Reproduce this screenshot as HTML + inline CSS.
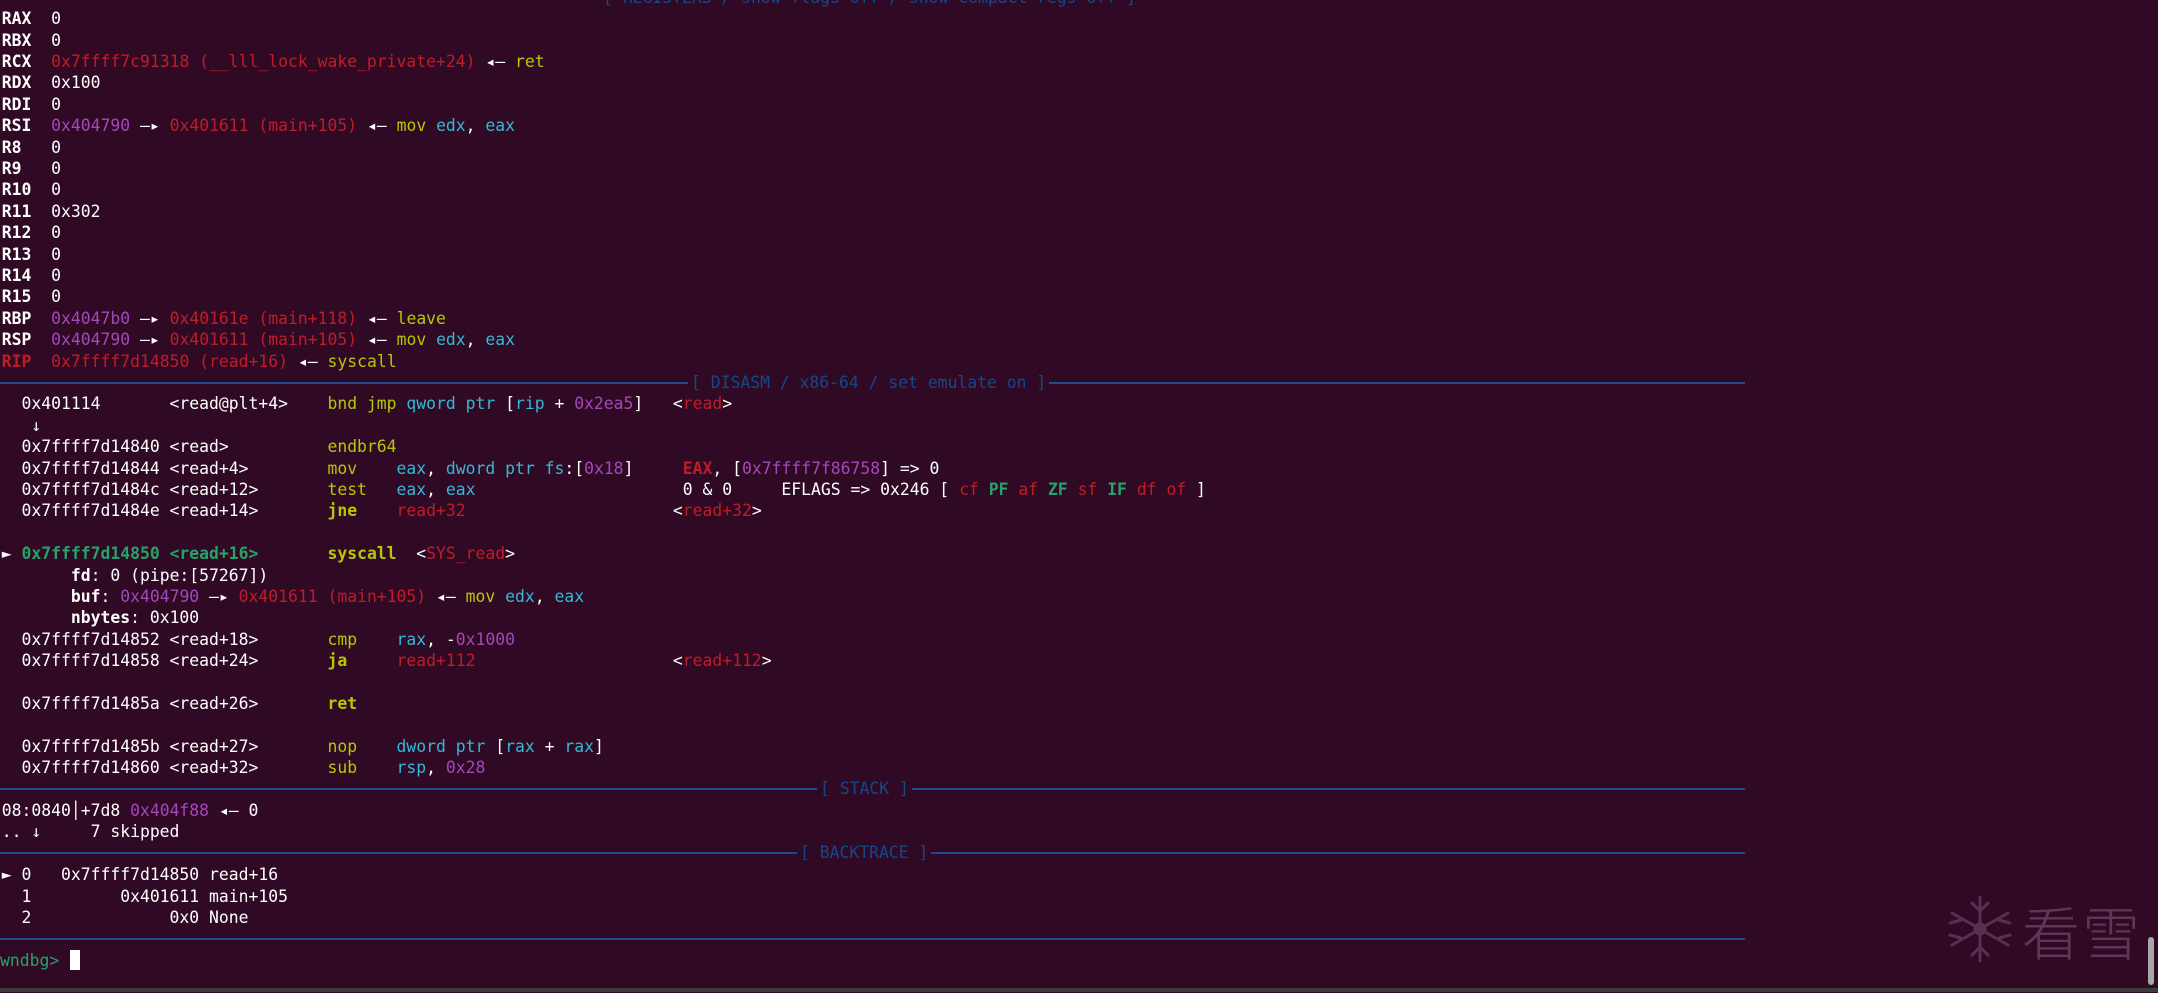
<!DOCTYPE html>
<html><head><meta charset="utf-8"><style>
html,body{margin:0;padding:0;}
body{width:2158px;height:992px;background:#300a24;overflow:hidden;position:relative;font-family:"DejaVu Sans Mono","Liberation Mono",monospace;font-size:16.4px;color:#ffffff;}
.w{position:absolute;left:0;top:1px;width:2158px;height:992px;}
.r{position:absolute;left:1.8px;height:21.4px;line-height:21.4px;white-space:pre;}
b{font-weight:bold;}
.R{color:#c01c28}.P{color:#a347ba}.Y{color:#b6c70a}.C{color:#33b8d6}.G{color:#26a269}.B{color:#12488b}
.sep{position:absolute;left:0;width:1745px;height:2px;background:#1b4c8e;}
.tt{position:absolute;height:21.4px;line-height:21.4px;white-space:pre;color:#12488b;background:#300a24;padding:0 3px;}
</style></head><body><div class="w">
<div class="sep" style="top:-5px"></div><div class="tt" style="top:-14px;left:600px">[ REGISTERS / show-flags off / show-compact-regs off ]</div>
<div class="r" style="top:7.2px"><b>RAX</b>  0</div>
<div class="r" style="top:28.6px"><b>RBX</b>  0</div>
<div class="r" style="top:50px"><b>RCX</b>  <span class="R">0x7ffff7c91318 (__lll_lock_wake_private+24)</span> ◂— <span class="Y">ret</span></div>
<div class="r" style="top:71.4px"><b>RDX</b>  0x100</div>
<div class="r" style="top:92.8px"><b>RDI</b>  0</div>
<div class="r" style="top:114.2px"><b>RSI</b>  <span class="P">0x404790</span> —▸ <span class="R">0x401611 (main+105)</span> ◂— <span class="Y">mov</span> <span class="C">edx</span>, <span class="C">eax</span></div>
<div class="r" style="top:135.6px"><b>R8 </b>  0</div>
<div class="r" style="top:157px"><b>R9 </b>  0</div>
<div class="r" style="top:178.4px"><b>R10</b>  0</div>
<div class="r" style="top:199.8px"><b>R11</b>  0x302</div>
<div class="r" style="top:221.2px"><b>R12</b>  0</div>
<div class="r" style="top:242.6px"><b>R13</b>  0</div>
<div class="r" style="top:264px"><b>R14</b>  0</div>
<div class="r" style="top:285.4px"><b>R15</b>  0</div>
<div class="r" style="top:306.8px"><b>RBP</b>  <span class="P">0x4047b0</span> —▸ <span class="R">0x40161e (main+118)</span> ◂— <span class="Y">leave</span></div>
<div class="r" style="top:328.2px"><b>RSP</b>  <span class="P">0x404790</span> —▸ <span class="R">0x401611 (main+105)</span> ◂— <span class="Y">mov</span> <span class="C">edx</span>, <span class="C">eax</span></div>
<div class="r" style="top:349.6px"><b class="R">RIP</b>  <span class="R">0x7ffff7d14850 (read+16)</span> ◂— <span class="Y">syscall</span></div>
<div class="sep" style="top:381px"></div><div class="tt" style="top:371px;left:688px">[ DISASM / x86-64 / set emulate on ]</div>
<div class="r" style="top:392.4px">  0x401114       &lt;read@plt+4&gt;    <span class="Y">bnd jmp</span> <span class="C">qword ptr</span> [<span class="C">rip</span> + <span class="P">0x2ea5</span>]   &lt;<span class="R">read</span>&gt;</div>
<div class="r" style="top:413.8px">   ↓</div>
<div class="r" style="top:435.2px">  0x7ffff7d14840 &lt;read&gt;          <span class="Y">endbr64</span></div>
<div class="r" style="top:456.6px">  0x7ffff7d14844 &lt;read+4&gt;        <span class="Y">mov</span>    <span class="C">eax</span>, <span class="C">dword ptr fs</span>:[<span class="P">0x18</span>]     <b class="R">EAX</b>, [<span class="P">0x7ffff7f86758</span>] =&gt; 0</div>
<div class="r" style="top:478px">  0x7ffff7d1484c &lt;read+12&gt;       <span class="Y">test</span>   <span class="C">eax</span>, <span class="C">eax</span>                     0 &amp; 0     EFLAGS =&gt; 0x246 [ <span class="R">cf</span> <b class="G">PF</b> <span class="R">af</span> <b class="G">ZF</b> <span class="R">sf</span> <b class="G">IF</b> <span class="R">df</span> <span class="R">of</span> ]</div>
<div class="r" style="top:499.4px">  0x7ffff7d1484e &lt;read+14&gt;       <b class="Y">jne</b>    <span class="R">read+32</span>                     &lt;<span class="R">read+32</span>&gt;</div>
<div class="r" style="top:542.2px">► <b class="G">0x7ffff7d14850 &lt;read+16&gt;</b>       <b class="Y">syscall</b>  &lt;<span class="R">SYS_read</span>&gt;</div>
<div class="r" style="top:563.6px">       <b>fd</b>: 0 (pipe:[57267])</div>
<div class="r" style="top:585px">       <b>buf</b>: <span class="P">0x404790</span> —▸ <span class="R">0x401611 (main+105)</span> ◂— <span class="Y">mov</span> <span class="C">edx</span>, <span class="C">eax</span></div>
<div class="r" style="top:606.4px">       <b>nbytes</b>: 0x100</div>
<div class="r" style="top:627.8px">  0x7ffff7d14852 &lt;read+18&gt;       <span class="Y">cmp</span>    <span class="C">rax</span>, -<span class="P">0x1000</span></div>
<div class="r" style="top:649.2px">  0x7ffff7d14858 &lt;read+24&gt;       <b class="Y">ja</b>     <span class="R">read+112</span>                    &lt;<span class="R">read+112</span>&gt;</div>
<div class="r" style="top:692px">  0x7ffff7d1485a &lt;read+26&gt;       <b class="Y">ret</b></div>
<div class="r" style="top:734.8px">  0x7ffff7d1485b &lt;read+27&gt;       <span class="Y">nop</span>    <span class="C">dword ptr</span> [<span class="C">rax</span> + <span class="C">rax</span>]</div>
<div class="r" style="top:756.2px">  0x7ffff7d14860 &lt;read+32&gt;       <span class="Y">sub</span>    <span class="C">rsp</span>, <span class="P">0x28</span></div>
<div class="sep" style="top:787px"></div><div class="tt" style="top:777px;left:817px">[ STACK ]</div>
<div class="r" style="top:799px">08:0840│+7d8 <span class="P">0x404f88</span> ◂— 0</div>
<div class="r" style="top:820.4px">.. ↓     7 skipped</div>
<div class="sep" style="top:851px"></div><div class="tt" style="top:841px;left:797px">[ BACKTRACE ]</div>
<div class="r" style="top:863.2px">► 0   0x7ffff7d14850 read+16</div>
<div class="r" style="top:884.6px">  1         0x401611 main+105</div>
<div class="r" style="top:906px">  2              0x0 None</div>
<div class="sep" style="top:937px"></div>
<div class="r" style="top:948.8px;left:0"><span class="G">wndbg&gt;</span> </div>
<div style="position:absolute;left:70px;top:949px;width:10px;height:20px;background:#fff"></div>
</div>
<svg style="position:absolute;left:1945px;top:893px" width="70" height="72" viewBox="0 0 70 72">
<g stroke="#5c2e52" stroke-width="3" fill="none" stroke-linecap="round">
<line x1="35" y1="4" x2="35" y2="68"/><line x1="7" y1="20" x2="63" y2="52"/><line x1="7" y1="52" x2="63" y2="20"/>
<line x1="27" y1="10" x2="35" y2="18"/><line x1="43" y1="10" x2="35" y2="18"/>
<line x1="27" y1="62" x2="35" y2="54"/><line x1="43" y1="62" x2="35" y2="54"/>
<line x1="5" y1="30" x2="16" y2="27"/><line x1="5" y1="42" x2="16" y2="45"/>
<line x1="65" y1="30" x2="54" y2="27"/><line x1="65" y1="42" x2="54" y2="45"/>
<circle cx="35" cy="36" r="5"/></g></svg>
<div style="position:absolute;left:2022px;top:895px;font-family:'Noto Sans CJK SC',sans-serif;font-size:58px;line-height:70px;color:#633458;font-weight:300;letter-spacing:2px">看雪</div>
<div style="position:absolute;left:2148px;top:937px;width:6px;height:48px;border-radius:3px;background:#a8a8a8"></div>
<div style="position:absolute;left:0;top:988px;width:2158px;height:4px;background:#3b3b3b"></div>
</body></html>
